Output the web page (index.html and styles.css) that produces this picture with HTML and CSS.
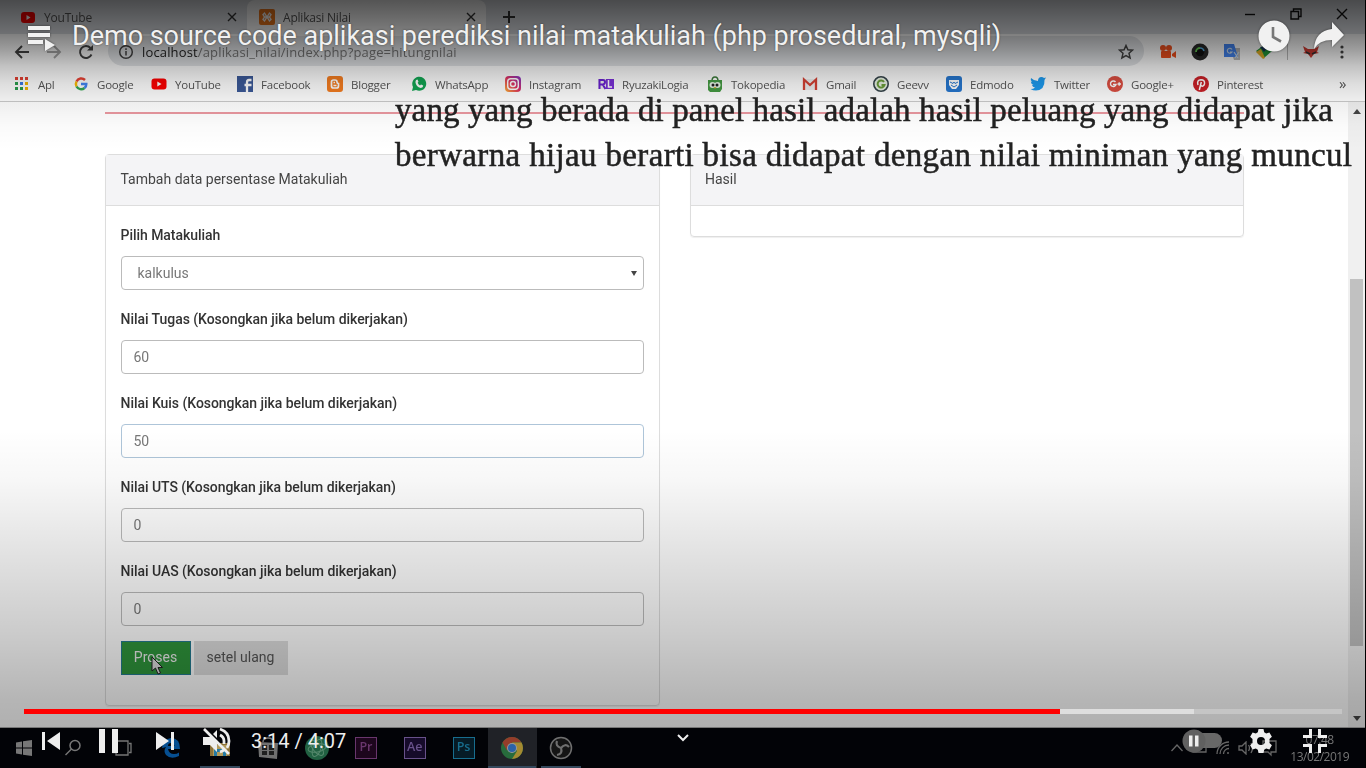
FILE: index.html
```html
<!DOCTYPE html>
<html lang="id">
<head>
<meta charset="utf-8">
<title>Demo source code aplikasi</title>
<link rel="stylesheet" href="styles.css">
</head>
<body>
<div class="player">
<div class="desktop">
  <div class="tabs">
    <div class="tab"><svg width="16" height="16" viewBox="0 0 16 16"><rect x="1" y="3" width="14" height="11" rx="3" fill="#f00"/><path d="M6.500 6v5l4-2.500z" fill="#fff"/></svg><span>YouTube</span><svg class="x" width="10" height="10" viewBox="0 0 10 10"><path d="M1 1l8 8M9 1l-8 8"/></svg></div>
    <div class="tab active"><svg width="16" height="16" viewBox="0 0 16 16"><rect width="16" height="16" rx="2" fill="#f27a1c"/><path d="M5.500 8h5M5.500 8L4 5.500 5.500 4 8 8l2.500-4L12 5.500 10.500 8l1.500 2.500-1.500 1.500L8 8l-2.500 4L4 10.500z" fill="none" stroke="#fff" stroke-width="1.400"/></svg><span>Aplikasi Nilai</span><svg class="x" width="10" height="10" viewBox="0 0 10 10"><path d="M1 1l8 8M9 1l-8 8"/></svg></div>
    <svg class="plus" width="12" height="12" viewBox="0 0 12 12"><path d="M6 0v12M0 6h12"/></svg>
    <div class="win"><svg width="12" height="12" viewBox="0 0 12 12"><path d="M1 6.500h10"/></svg><svg width="12" height="12" viewBox="0 0 12 12"><path d="M1 3.500h7.500V11H1zM3.500 3V1H11v7.500H9"/></svg><svg width="12" height="12" viewBox="0 0 12 12"><path d="M1 1l10 10M11 1L1 11"/></svg></div>
  </div>
  <div class="toolbar">
    <div class="nav">
      <svg width="16" height="16" viewBox="0 0 16 16"><path d="M15 8H2M8 2L2 8l6 6"/></svg>
      <svg class="dim" width="16" height="16" viewBox="0 0 16 16"><path d="M1 8h13M8 2l6 6-6 6"/></svg>
      <svg width="16" height="16" viewBox="0 0 16 16"><path d="M13.500 10.500A6 6 0 1 1 12.500 4"/><path d="M9 6.500h6V1z" fill="#444" stroke="none"/></svg>
    </div>
    <div class="omnibox">
      <svg width="16" height="16" viewBox="0 0 16 16"><circle cx="8" cy="8" r="6.300"/><path d="M8 7v4.500M8 4.300v1.600"/></svg>
      <span class="url"><b>localhost</b>/aplikasi_nilai/index.php?page=hitungnilai</span>
      <svg class="star" width="16" height="16" viewBox="0 0 16 16"><path d="M8 1.500l1.900 4.300 4.600.4-3.500 3.100 1.100 4.600L8 11.500l-4.100 2.400L5 9.300 1.500 6.200l4.600-.4z"/></svg>
    </div>
    <div class="exts">
      <svg width="18" height="16" viewBox="0 0 18 16" fill="#f4511e"><circle cx="4" cy="4" r="3"/><circle cx="10" cy="4" r="3"/><rect x="2" y="7" width="10" height="7" rx="1"/><path d="M13 10l4-3v7l-4-2z"/></svg>
      <svg width="18" height="18" viewBox="0 0 18 18"><circle cx="9" cy="9" r="8.500" fill="#2a2a2a"/><circle cx="9" cy="9" r="4.200" fill="#111"/><path d="M5 9a4 4 0 0 1 4-4" fill="none" stroke="#6c5" stroke-width="1.800"/><path d="M9 5a4 4 0 0 1 4 3" fill="none" stroke="#5ad" stroke-width="1.500"/></svg>
      <svg width="18" height="18" viewBox="0 0 18 18"><path d="M7 5h10v12H11z" fill="#bbb"/><path d="M1 1h10l4 13H1z" fill="#4285f4"/><path d="M9 6.500A2.500 2.500 0 1 0 9 9H7M11 9l4 6M16 9l-4 6" stroke="#cde" fill="none" stroke-width="1.200"/></svg>
      <svg width="18" height="18" viewBox="0 0 18 18"><path d="M1 8l8-6 8 6-8 7z" fill="#239b3a"/><path d="M1 9l5-3 4 9-2 1z" fill="#e7b328"/><path d="M5 4l4 5 5-6z" fill="#1a365d"/></svg>
      <i></i>
      <svg width="18" height="16" viewBox="0 0 18 16"><path d="M1 2l5 3h6l5-3-2 6 2 1-5 1-3 4-3-4-5-1 2-1z" fill="#d33c33"/><path d="M4 8l4 2M14 8l-4 2" stroke="#333" stroke-width="1.500"/></svg>
      <svg width="8" height="16" viewBox="0 0 8 16" fill="#444"><circle cx="4" cy="3" r="1.600"/><circle cx="4" cy="8" r="1.600"/><circle cx="4" cy="13" r="1.600"/></svg>
    </div>
  </div>
  <div class="bookmarks">
    <div><svg viewBox="0 0 16 16"><g fill="#e34133"><path d="M1 1h3v3H1zM6 1h3v3H6zM11 1h3v3h-3z"/></g><path d="M1 6h3v3H1z" fill="#2a9d4c"/><path d="M6 6h3v3H6z" fill="#3b78e7"/><path d="M11 6h3v3h-3zM11 11h3v3h-3z" fill="#f4b400"/><path d="M1 11h3v3H1zM6 11h3v3H6z" fill="#2a9d4c"/></svg>Apl</div>
    <div><svg viewBox="0 0 16 16" fill="none" stroke-width="2.500"><path d="M12 4A5.300 5.300 0 0 0 3.500 5.500" stroke="#ea4335"/><path d="M3.500 5.500a5.300 5.300 0 0 0 0 5" stroke="#fbbc05"/><path d="M3.500 10.500A5.300 5.300 0 0 0 11.500 12" stroke="#34a853"/><path d="M11.500 12A5 5 0 0 0 13.300 8H8" stroke="#4285f4"/></svg>Google</div>
    <div><svg viewBox="0 0 16 16"><rect x=".5" y="2.500" width="15" height="11" rx="3" fill="#f00"/><path d="M6.300 5.500v5l4.200-2.500z" fill="#fff"/></svg>YouTube</div>
    <div><svg viewBox="0 0 16 16"><path d="M0 0h16v16H0z" fill="#3b5998"/><path d="M10 16V9H7.500M10 9h4.500M10 10V6.500Q10 4 12 4h2.500" stroke="#fff" stroke-width="2.300" fill="none"/></svg>Facebook</div>
    <div><svg viewBox="0 0 16 16"><rect width="16" height="16" rx="3" fill="#f57d20"/><path d="M4.500 6a2 2 0 0 1 2-2H8a2 2 0 0 1 2 2q0 1.500 1.500 1.500V10a2 2 0 0 1-2 2h-3a2 2 0 0 1-2-2zM6.500 6.500H8M6.500 9.500h3" fill="none" stroke="#fff" stroke-width="1.700"/></svg>Blogger</div>
    <div><svg viewBox="0 0 16 16"><path d="M1 15l1-4a7 7 0 1 1 3 3z" fill="#12a653"/><path d="M5 4l1.500-.4 1 2.200-.8 1Q7.500 9 9 9.500l1-1 2.200 1q0 2.400-2.400 2.500Q5 11 4.400 6z" fill="#fff"/></svg>WhatsApp</div>
    <div><svg viewBox="0 0 16 16"><defs><linearGradient id="ig" x1="0" y1="1" x2="1" y2="0"><stop stop-color="#fcb034"/><stop offset=".5" stop-color="#e03060"/><stop offset="1" stop-color="#7a35cc"/></linearGradient></defs><rect width="16" height="16" rx="4" fill="url(#ig)"/><g fill="none" stroke="#fff" stroke-width="1.400"><rect x="2.700" y="2.700" width="10.600" height="10.600" rx="3"/><circle cx="8" cy="8" r="2.500"/></g></svg>Instagram</div>
    <div><svg viewBox="0 0 16 16"><path d="M0 3h16v10H0z" fill="#eee"/><path d="M8 3h8v10H8z" fill="#7a31d8"/><path d="M1.500 13V4H5q2 0 2 2T5 8.500H2M5 9l2.500 4" fill="none" stroke="#6920d0" stroke-width="2"/><path d="M10.500 4v7H14" fill="none" stroke="#fff" stroke-width="1.500"/></svg>RyuzakiLogia</div>
    <div><svg viewBox="0 0 16 16"><path d="M5 5q0-4 3-4t3 4" fill="none" stroke="#3a7a38" stroke-width="1.500"/><path d="M1 4h14v9l-2 3H3l-2-2z" fill="#459b43"/><circle cx="5.500" cy="9" r="3" fill="#e7f4e5"/><circle cx="10.500" cy="9" r="3" fill="#e7f4e5"/><circle cx="6" cy="9" r="1.500" fill="#222"/><circle cx="10" cy="9" r="1.500" fill="#222"/><path d="M7 11h2l-1 2z" fill="#f5a623"/></svg>Tokopedia</div>
    <div><svg viewBox="0 0 16 16"><path d="M1 3h14v11H1z" fill="#eee"/><path d="M2 14V3.500l6 5.500 6-5.500V14" fill="none" stroke="#d54134" stroke-width="2.300"/></svg>Gmail</div>
    <div><svg viewBox="0 0 16 16"><circle cx="8" cy="8" r="7.200" fill="#e8f1e2" stroke="#35444a" stroke-width="1.600"/><path d="M11 6A3.500 3.500 0 1 0 11.500 9H8.500" fill="none" stroke="#6a9d3a" stroke-width="2"/></svg>Geevv</div>
    <div><svg viewBox="0 0 16 16"><rect width="16" height="16" rx="3" fill="#2677d0"/><path d="M3 4h10v5l-3 4H6L3 9z" fill="#fff"/><path d="M4 6l3 1.500L8 6l1 1.500L12 6M5 9l3 2 3-2" fill="none" stroke="#2677d0"/></svg>Edmodo</div>
    <div><svg viewBox="0 0 16 16"><path d="M1 2q3 3 7 3 0-4 3.500-4 1.500 0 2.500 1l2-.5-1.500 2.500Q15 14 6 14.500q-3 0-5.500-1.500 3 0 4.500-1.500Q2.500 11 2 9h1.500Q1 8 .8 5.500L2 6Q0 4 1 2z" fill="#1d9bf0"/></svg>Twitter</div>
    <div><svg viewBox="0 0 16 16"><circle cx="8" cy="8" r="8" fill="#dc4e41"/><path d="M8.500 6A2.800 2.800 0 1 0 9 8.500H6M10.500 8H14M12.200 6.300v3.500" fill="none" stroke="#fff" stroke-width="1.400"/></svg>Google+</div>
    <div><svg viewBox="0 0 16 16"><circle cx="8" cy="8" r="8" fill="#cb2027"/><path d="M5 9Q3.500 4 8 3.700q4 0 3.500 4-1 3.500-3.500 2M8.300 6L6.300 14" fill="none" stroke="#fff" stroke-width="1.500"/></svg>Pinterest</div>
    <div class="more">»</div>
  </div>
  <div class="view">
    <div class="page">
      <div class="rule"></div>
      <div class="cards">
        <section class="card">
          <header>Tambah data persentase Matakuliah</header>
          <div class="form">
            <label>Pilih Matakuliah</label><div class="input select"><span>kalkulus</span><em></em></div>
            <label>Nilai Tugas (Kosongkan jika belum dikerjakan)</label><div class="input">60</div>
            <label>Nilai Kuis (Kosongkan jika belum dikerjakan)</label><div class="input focus">50</div>
            <label>Nilai UTS (Kosongkan jika belum dikerjakan)</label><div class="input">0</div>
            <label>Nilai UAS (Kosongkan jika belum dikerjakan)</label><div class="input">0</div>
            <div class="buttons"><span class="btn go">Proses</span><span class="btn">setel ulang</span></div>
          </div>
        </section>
        <section class="card"><header>Hasil</header><div class="empty"></div></section>
      </div>
    </div>
    <div class="scroll"><em class="up"></em><div class="thumb"></div><em></em></div>
  </div>
  <div class="taskbar">
    <div class="app"><svg width="18" height="18" viewBox="0 0 18 18" fill="#777"><path d="M1 3.500l6-1v6H1zM8 2.300L17 1v7.500H8zM1 9.500h6v6l-6-1zM8 9.500h9V17l-9-1.300z"/></svg></div>
    <div class="app"><svg width="18" height="18" viewBox="0 0 18 18" fill="none" stroke="#777" stroke-width="1.500"><circle cx="11" cy="6.500" r="5"/><path d="M7.500 10L1.500 16"/></svg></div>
    <div class="app"><svg width="20" height="16" viewBox="0 0 20 16" fill="none" stroke="#777" stroke-width="1.300"><path d="M4 1h12v14H4zM3 3.500H1v9h2M17 3.500h2v9h-2"/></svg></div>
    <div class="app"><svg width="20" height="22" viewBox="0 0 20 22"><path d="M1 11Q2 2 10 1q9 0 9 11H7q1 5 6 5 3 0 5-1.500V19Q10 23 5 18q-3-4 0-8-3 1-4 1zm6-2h6.500Q13 6 10 6T7 9z" fill="#064f91"/></svg></div>
    <div class="app open"><svg width="22" height="20" viewBox="0 0 22 20"><path d="M1 3h7l2 2h11v13H1z" fill="#8c7138"/><path d="M4 7h14v11H4z" fill="#b19a5c"/><path d="M5 18v-7h12v7h-3v-4H8v4z" fill="#247aa4"/></svg></div>
    <div class="app"><svg width="22" height="22" viewBox="0 0 22 22"><path d="M6 5q0-4 5-4t5 4" fill="none" stroke="#777" stroke-width="1.500"/><path d="M1 5l20 1-1 16-18-2z" fill="#707070"/><path d="M5 8h5v5H5zM12 8h5v5h-5zM5 14h5v4H5zM12 14h5v4h-5z" fill="#202020"/></svg></div>
    <div class="app"><svg width="24" height="24" viewBox="0 0 24 24"><circle cx="12" cy="12" r="12" fill="#216142"/><g fill="none" stroke="#55886c"><ellipse cx="12" cy="12" rx="9" ry="4" transform="rotate(50 12 12)"/><ellipse cx="12" cy="12" rx="9" ry="4" transform="rotate(110 12 12)"/><ellipse cx="12" cy="12" rx="9" ry="4" transform="rotate(170 12 12)"/></g></svg></div>
    <div class="app"><b class="adobe pr">Pr</b></div>
    <div class="app"><b class="adobe ae">Ae</b></div>
    <div class="app"><b class="adobe ps">Ps</b></div>
    <div class="app open current"><svg width="24" height="24" viewBox="0 0 24 24"><circle cx="12" cy="12" r="11" fill="#276b3c"/><path d="M2.500 6.500A11 11 0 0 1 21.500 6.500H12L7 14.500z" fill="#943d2a"/><path d="M12 6.500h9.500A11 11 0 0 1 12 23l5-8z" fill="#a58a31"/><circle cx="12" cy="12" r="5" fill="#999"/><circle cx="12" cy="12" r="4" fill="#2b62a8"/></svg></div>
    <div class="app open last"><svg width="24" height="24" viewBox="0 0 24 24" fill="none" stroke="#6f6f6f"><circle cx="12" cy="12" r="10.500" fill="#151515" stroke-width="1.500"/><path d="M12 12Q6 10 8 5M12 12q4-5 8-1M12 12q2 6-4 7" stroke-width="2.200"/></svg></div>
    <div class="tray">
      <svg width="14" height="16" viewBox="0 0 14 16"><path d="M1.500 11L7 5l5.500 6"/></svg>
      <svg width="16" height="12" viewBox="0 0 16 12"><path d="M1 3h13v7H1z"/></svg>
      <svg width="14" height="14" viewBox="0 0 14 14"><path d="M1 13A12 12 0 0 1 13 1M4 13a9 9 0 0 1 9-9M7.500 13A5.500 5.500 0 0 1 13 7.500M11 12h2"/></svg>
      <svg width="16" height="14" viewBox="0 0 16 14"><path d="M1 5h3l4-4v12L4 9H1zM10.500 4q2 3 0 6M13 2q3 5 0 10"/></svg>
      <svg width="16" height="18" viewBox="0 0 16 18"><path d="M1 2h13v11H9v3l-3-3H1z"/></svg>
      <div class="clock"><span>07:48</span><span>13/02/2019</span></div>
    </div>
  </div>
</div>
<svg class="caption" width="1366" height="200" viewBox="0 0 1366 200"><text x="395" y="121" textLength="938">yang yang berada di panel hasil adalah hasil peluang yang didapat jika</text><text x="395" y="166" textLength="957">berwarna hijau berarti bisa didapat dengan nilai miniman yang muncul</text></svg>
<svg class="cursor" width="14" height="20" viewBox="0 0 14 20"><path d="M2 1v14l3.500-3 2.500 6 2.500-1L8 11.500h4.500z" fill="#ddd" stroke="#222"/></svg>
<div class="shade-top"></div>
<div class="shade-bottom"></div>
<div class="topbar">
  <svg width="28" height="26" viewBox="0 0 28 26"><path d="M0 0h22v4H0zM0 7h22v4H0zM0 14h15v4H0zM17 13l10 6-10 6z" fill="#f1f1f1"/></svg>
  <h1>Demo source code aplikasi perediksi nilai matakuliah (php prosedural, mysqli)</h1>
  <svg class="later" width="32" height="32" viewBox="0 0 32 32"><circle cx="16" cy="16" r="15.500" fill="#f1f1f1"/><path d="M15 7v10l8 4.500" fill="none" stroke="#777" stroke-width="2.600"/></svg>
  <svg class="share" width="32" height="28" viewBox="0 0 32 28"><path d="M19 0l12 13-12 12v-7Q6 18 1 27 2 9 19 7z" fill="#f1f1f1"/></svg>
</div>
<div class="controls">
  <div class="progress"><div class="loaded"></div><div class="played"></div></div>
  <div class="row">
    <svg class="prev" width="18" height="18" viewBox="0 0 18 18"><path d="M0 0h3v18H0zM18 0v18L5 9z"/></svg>
    <svg class="pause" width="20" height="24" viewBox="0 0 20 24"><path d="M0 0h6v24H0zM13 0h6v24h-6z"/></svg>
    <svg class="next" width="18" height="18" viewBox="0 0 18 18"><path d="M0 0l13 9-13 9zM15 0h3v18h-3z"/></svg>
    <svg class="mute" width="28" height="28" viewBox="0 0 28 28"><path d="M0 10h8l6 6v9l-7-7H0zM14 3v8l-4-4z"/><path d="M17 2Q26 5 26 14q0 4-2 7M17 8q4 2 4 6v3M17 25q3-1 5-3" fill="none" stroke="#eee" stroke-width="2.800"/><path d="M1 2l25 25" stroke="#eee" stroke-width="2.700"/></svg>
    <span class="time">3:14 / 4:07</span>
    <svg class="chev" width="12" height="8" viewBox="0 0 12 8"><path d="M1 1l5 5 5-5" fill="none" stroke="#eee" stroke-width="2"/></svg>
    <svg class="toggle" width="40" height="24" viewBox="0 0 40 24"><rect x="5" y="4" width="35" height="15" rx="7.500" fill="#686868"/><circle cx="12" cy="12" r="11.500" fill="#606060"/><path d="M7 6.500h3.500v11H7zM13 6.500h3.500v11H13z"/></svg>
    <svg class="gear" width="24" height="24" viewBox="0 0 24 24"><path fill-rule="evenodd" d="M9.500 0h5l.7 3.200 2 1.200 3.200-1 2.500 4.300L20.500 10v4l2.400 2.300-2.500 4.300-3.200-1-2 1.200-.7 3.200h-5l-.7-3.200-2-1.200-3.200 1-2.500-4.300L3.500 14v-4L1.100 7.700l2.500-4.300 3.200 1 2-1.200zM12 8a4 4 0 1 0 0 8 4 4 0 0 0 0-8z"/></svg>
    <svg class="exit" width="24" height="24" viewBox="0 0 24 24"><path d="M6 0h3v9H0V6h6zM15 0h3v6h6v3h-9zM0 15h9v9H6v-6H0zM15 15h9v3h-6v6h-3z"/></svg>
  </div>
</div>
</div>
</body>
</html>
```

FILE: styles.css
```css
*{box-sizing:border-box}
body{margin:0;background:#000;overflow:hidden}
svg{display:block;flex:none}
.player{position:relative;width:1366px;height:768px;overflow:hidden;background:#000;font-family:Roboto,sans-serif}
.desktop{width:1365px;height:768px;display:flex;flex-direction:column;filter:blur(.6px);background:#fff}
.tabs{height:34px;flex:none;background:#dee1e6;display:flex;align-items:center;font:12px "Open Sans",sans-serif;color:#555}
.tab{width:247px;height:34px;display:flex;align-items:center;padding:0 10px 0 20px;gap:8px;letter-spacing:-.2px}
.tab span{flex:1}
.tab.active{width:239px;background:#fff;border-radius:8px 8px 0 0;padding:0 10px 0 12px}
.x,.plus,.win svg{fill:none;stroke:#333;stroke-width:1.4}
.plus{margin-left:17px;stroke-width:2}
.win{margin-left:auto;display:flex;gap:34px;padding:0 17px 6px 0}
.win svg{stroke:#111}
.toolbar{height:34px;flex:none;display:flex;align-items:center}
.nav{width:108px;display:flex;gap:16px;padding-left:14px;padding-top:2px}
.nav svg,.omnibox svg{fill:none;stroke:#444;stroke-width:1.9}
.nav .dim{stroke:#aaa}
.omnibox{width:1036px;height:30px;border-radius:15px;background:#e4e6e9;display:flex;align-items:center;gap:8px;padding:2px 10px 0;font:13px "Open Sans",sans-serif;color:#777}
.omnibox svg{stroke-width:1.5}
.url{flex:1;letter-spacing:.15px}
.url b{font-weight:400;color:#222}
.exts{flex:1;display:flex;align-items:center;padding:2px 0 0 15px;gap:14px}
.exts i{width:1px;height:16px;background:#bbb}
.exts svg:last-child{margin-left:4px}
.bookmarks{height:34px;flex:none;border-bottom:1px solid #ccc;display:grid;grid-template-columns:59px 78px 86px 90px 84px 94px 93px 109px 95px 71px 73px 84px 77px 86px 146px 20px;padding:0 0 1px 14px;align-items:center;font:11.5px "Open Sans",sans-serif;color:#555;white-space:nowrap}
.bookmarks div{display:flex;align-items:center;gap:8px;letter-spacing:-.22px}
.bookmarks svg{width:16px;height:16px}
.bookmarks .more{font-size:15px;padding-bottom:3px}
.view{height:625px;flex:none;display:flex}
.page{flex:1;padding:10px 104px 0 105px}
.rule{height:2px;background:#ea98a0;width:1139px;margin-bottom:40px}
.cards{display:flex;gap:30px;align-items:flex-start;width:1139px}
.card{flex:1;border:1px solid #ddd;border-radius:4px;box-shadow:0 1px 1px #0001;font-size:14px;color:#444}
.card header{height:51px;background:#f4f4f6;border-bottom:1px solid #ddd;padding:0 14.500px;line-height:49px}
.form{padding:15px 15px 30px 14.500px;height:499px}
.form label{display:block;height:28px;line-height:28px;margin-bottom:7px;font-weight:500;letter-spacing:-.04px;color:#333}
.input{height:34px;border:1px solid #bbb;border-radius:4px;padding:0 12px;line-height:32px;color:#777;margin-bottom:15px;font-size:14px}
.focus{border-color:#aec5d9}
.select{display:flex;align-items:center;justify-content:space-between;padding:0 6px 0 16px}
em{display:block;border:3px solid transparent;border-top:5px solid #444;border-bottom:0}
.buttons{display:flex;gap:3px}
.btn{height:34px;width:94px;text-align:center;line-height:33px;background:#dedede;color:#555}
.btn.go{width:70px;background:#2f963c;color:#eee;border:1px solid #237b90;line-height:31px}
.empty{height:30px}
.scroll{width:17px;background:#f0f0f0;display:flex;flex-direction:column;align-items:center;padding:7px 0 6px}
.scroll em{margin-top:auto;border-width:5px 4px 0}
.scroll .up{margin:0;transform:rotate(180deg)}
.thumb{width:13px;height:367px;background:#c1c1c1;margin-top:165px}
.taskbar{height:41px;flex:none;background:#020307;border-top:1px solid #777;display:flex}
.app{width:48.8px;height:40px;display:flex;align-items:center;justify-content:center}
.open{background:linear-gradient(#34485c,#34485c) center bottom/40px 2px no-repeat}
.current{background:linear-gradient(#34485c,#34485c) center bottom/48px 2px no-repeat #202227}
.adobe{width:22px;height:22px;border:1.5px solid;font:600 12.500px/18px "Open Sans",sans-serif;text-align:center}
.pr{color:#69366d;background:#1d061d}.ae{color:#68518a;background:#160b2a}.ps{color:#176d8e;background:#061b26}
.tray{margin-left:auto;display:flex;align-items:center;gap:8px;padding-right:16px}
.tray svg{fill:none;stroke:#666;stroke-width:1.3}
.clock{font:12px/17px "Open Sans",sans-serif;color:#777;display:flex;flex-direction:column;align-items:center;margin-left:4px;letter-spacing:-.5px}
.caption{position:absolute;left:0;top:0;font:33px "Liberation Serif",serif;fill:#222;stroke:#222;stroke-width:.5px;filter:blur(.5px)}
.cursor{position:absolute;left:150px;top:656px}
.shade-top,.shade-bottom{position:absolute;left:0;right:0}
.shade-top{top:0;height:150px;background:linear-gradient(rgba(0,0,0,.67),rgba(0,0,0,.5) 34px,rgba(0,0,0,.38) 50px,rgba(0,0,0,.24) 66px,rgba(0,0,0,.13) 84px,rgba(0,0,0,.07) 100px,rgba(0,0,0,.02) 125px,transparent)}
.shade-bottom{top:430px;height:297px;background:linear-gradient(transparent,rgba(0,0,0,.03) 50px,rgba(0,0,0,.12) 130px,rgba(0,0,0,.2) 200px,rgba(0,0,0,.29) 270px,rgba(0,0,0,.31))}
.topbar{position:absolute;left:28px;top:18px;right:21px;height:36px;display:flex;align-items:center}
.topbar svg{filter:drop-shadow(0 0 1px #0008)}
.topbar>svg:first-child{margin-top:6px}
.topbar h1{margin:-1px auto 0 16px;font:400 27px/36px Roboto,sans-serif;letter-spacing:-.02px;color:#f1f1f1;text-shadow:0 0 2px #0008;white-space:nowrap}
.share{margin-left:23px}
.controls{position:absolute;left:24px;top:709px;width:1318px}
.progress{height:5px;background:#c5c5c5;display:grid}
.progress div{grid-area:1/1}
.loaded{width:1170px;background:#dedede}.played{width:1035.5px;background:#f00}
.row{height:54px;display:flex;align-items:center;padding:0 15px 0 18px;fill:#eee}
.pause{margin-left:39px}.next{margin-left:37px}.mute{margin-left:29px}
.time{width:96px;margin-left:20px;font-size:20px;color:#eee;white-space:nowrap}
.chev{margin:-7px 0 0 330px}
.toggle{margin-left:auto}.gear{margin-left:27px}.exit{margin-left:30px}
```
